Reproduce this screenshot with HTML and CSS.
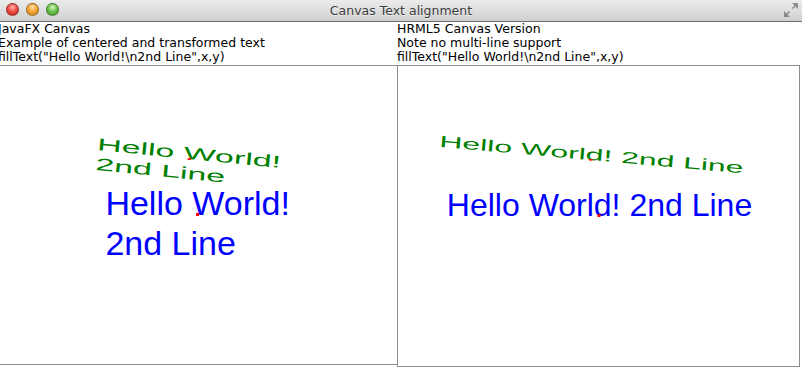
FILE: index.html
```html
<!DOCTYPE html>
<html>
<head>
<meta charset="utf-8">
<title>Canvas Text alignment</title>
<link rel="stylesheet" href="styles.css">
</head>
<body>
<div class="window">
  <div class="titlebar">
    <div class="lights">
      <span class="light red"></span>
      <span class="light orange"></span>
      <span class="light green"></span>
    </div>
    <div class="title">Canvas Text alignment</div>
    <div class="tools">
      <svg class="resize" width="14" height="14" viewBox="0 0 14 14">
        <polygon points="8,0 14,0 14,6" fill="#8b8b8b"/>
        <line x1="12.5" y1="1.5" x2="8.5" y2="5.5" stroke="#8b8b8b" stroke-width="1.6"/>
        <polygon points="0,8 0,14 6,14" fill="#8b8b8b"/>
        <line x1="1.5" y1="12.5" x2="5.5" y2="8.5" stroke="#8b8b8b" stroke-width="1.6"/>
      </svg>
    </div>
  </div>
  <div class="content">
    <section class="pane pane-left">
      <div class="caption">
        <div>JavaFX Canvas</div>
        <div>Example of centered and transformed text</div>
        <div>fillText("Hello World!\n2nd Line",x,y)</div>
      </div>
      <div class="canvas canvas-left">
        <svg class="drawing" width="397" height="298" viewBox="0 66 397 298">
          <g class="green" transform="translate(189 159) rotate(5.6) scale(1 0.5)">
            <text x="-92.6" y="0">Hello World!</text>
            <text x="-92.6" y="40">2nd Line</text>
          </g>
          <rect class="dot" x="187.5" y="158.3" width="3.5" height="1.6"/>
          <g class="blue">
            <text x="105.4" y="215">Hello World!</text>
            <text x="105.4" y="255">2nd Line</text>
          </g>
          <rect class="dot" x="196" y="213" width="3" height="3"/>
        </svg>
      </div>
    </section>
    <section class="pane pane-right">
      <div class="caption">
        <div>HRML5 Canvas Version</div>
        <div>Note no multi-line support</div>
        <div>fillText("Hello World!\n2nd Line",x,y)</div>
      </div>
      <div class="canvas canvas-right">
        <svg class="drawing" width="401" height="300" viewBox="398 66 401 300">
          <g class="green small" transform="translate(591 160) rotate(5) scale(1 0.5)">
            <text x="0" y="0" text-anchor="middle">Hello World! 2nd Line</text>
          </g>
          <rect class="dot" x="589" y="159" width="3.5" height="1.6"/>
          <g class="blue small">
            <text x="599.5" y="216" text-anchor="middle">Hello World! 2nd Line</text>
          </g>
          <rect class="dot" x="597.5" y="214" width="3" height="3"/>
        </svg>
      </div>
    </section>
  </div>
</div>
</body>
</html>
```
FILE: styles.css
```css
html, body {
  margin: 0;
  padding: 0;
  background: #ffffff;
}

body {
  width: 802px;
  height: 369px;
  overflow: hidden;
  font-family: "DejaVu Sans", "Noto Sans", sans-serif;
  color: #000;
}

.window {
  width: 802px;
  height: 369px;
  overflow: hidden;
  background: #fff;
}

.titlebar {
  height: 21px;
  border-bottom: 1px solid #6f6f6f;
  background: linear-gradient(#ececec, #d0d0d0);
  display: grid;
  grid-template-columns: 1fr auto 1fr;
  align-items: center;
}

.lights {
  display: flex;
  gap: 7px;
  padding-left: 5.5px;
  align-items: center;
  margin-top: -2px;
}

.light {
  width: 13px;
  height: 13px;
  border-radius: 50%;
  box-sizing: border-box;
  border: 1px solid rgba(0, 0, 0, 0.35);
}

.red {
  background: radial-gradient(circle at 50% 30%, #ffb3ad 0%, #ef4e46 45%, #c7221c 100%);
}

.orange {
  background: radial-gradient(circle at 50% 30%, #ffe2a8 0%, #f5a93a 45%, #cf7c10 100%);
}

.green {
  background: radial-gradient(circle at 50% 30%, #d5f5b9 0%, #70c34e 45%, #3f9a24 100%);
}

.title {
  font-size: 12.5px;
  color: #3c3c3c;
  text-shadow: 0 1px 0 rgba(255, 255, 255, 0.6);
  line-height: 21px;
}

.tools {
  display: flex;
  justify-content: flex-end;
  padding-right: 4px;
}

.resize {
  display: block;
  margin-top: -2px;
}

.content {
  display: flex;
}

.pane-left {
  width: 398px;
  margin-left: -1px;
}

.pane-left .caption {
  margin-left: -1px;
}

.pane-right {
  width: 403px;
}

.caption {
  font-size: 12.5px;
  line-height: 14px;
  height: 43px;
  white-space: nowrap;
}

.canvas {
  box-sizing: border-box;
  border: 1px solid #8d8d8d;
  overflow: hidden;
}

.canvas-left {
  border-right: none;
  height: 300px;
}

.canvas-right {
  height: 302px;
}

.drawing {
  display: block;
}

.drawing text {
  font-family: "Liberation Sans", Arial, sans-serif;
  font-size: 34px;
}

.drawing .small text {
  font-size: 32px;
}

.drawing g.green {
  background: none;
  fill: #008000;
}

.drawing g.blue {
  fill: #0000ff;
}

.dot {
  fill: #ff0000;
}
```
